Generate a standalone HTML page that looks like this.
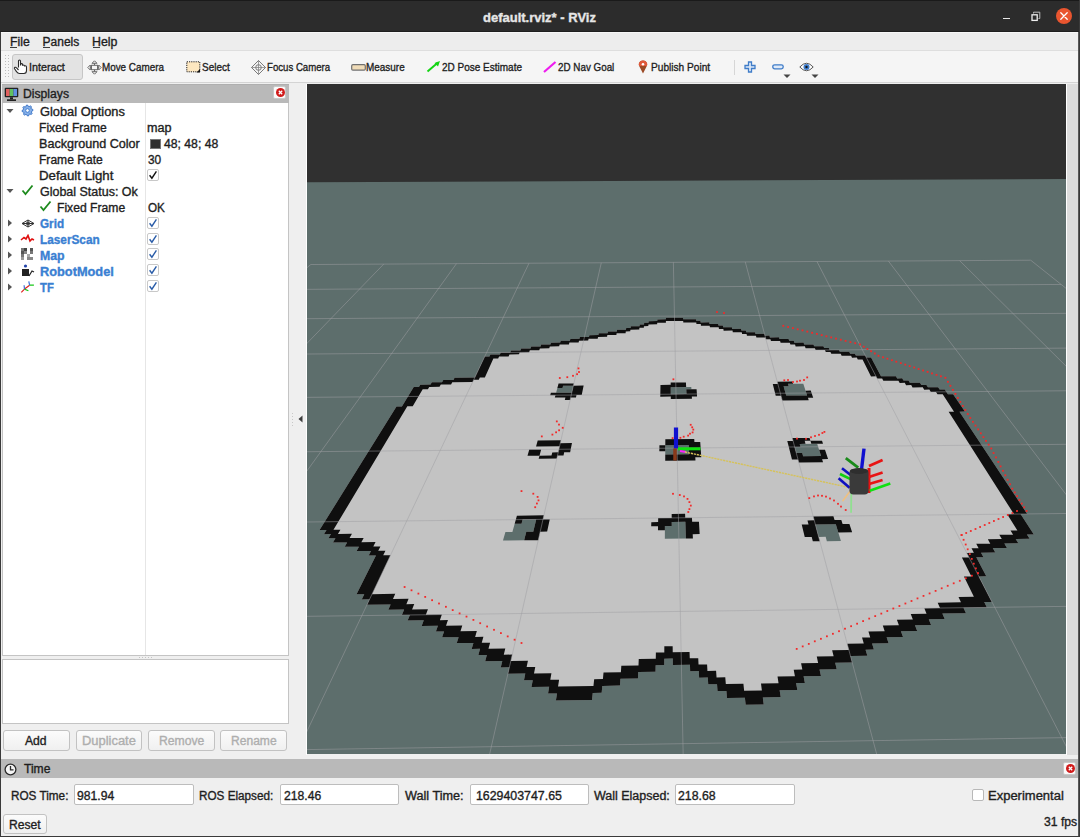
<!DOCTYPE html>
<html><head><meta charset="utf-8"><style>
html,body{margin:0;padding:0;width:1080px;height:837px;overflow:hidden;background:#efefef}
body{position:relative;font-family:"Liberation Sans",sans-serif}
body>div,body>span,body>svg{position:absolute;display:block}
span{white-space:pre;transform-origin:0 0;-webkit-text-stroke:0.35px currentColor}
</style></head><body>
<div style="left:0px;top:0px;width:1080px;height:837px;background:#efefef"></div>
<div style="left:0px;top:0px;width:1080px;height:31px;background:#2c2c2c"></div>
<div style="left:0px;top:31px;width:1080px;height:1px;background:#1f1f1f"></div>
<span style="left:483px;top:10.50px;font-size:13px;line-height:13px;color:#e6e6e6;font-weight:bold;">default.rviz* - RViz</span>
<div style="left:0px;top:0px;width:1080px;height:1px;background:#1a1a1a"></div>
<div style="left:1003px;top:17.5px;width:7px;height:1.5px;background:#e8e8e8"></div>
<svg style="left:1030px;top:11px" width="12" height="11"><path d="M3.5 2.5L3.5 1.2L9.8 1.2L9.8 7.5L8.5 7.5" fill="none" stroke="#bdbdbd" stroke-width="1"/><rect x="2" y="3.8" width="5.2" height="5.6" fill="none" stroke="#f0f0f0" stroke-width="1.3"/></svg>
<div style="left:1056px;top:8px;width:16px;height:16px;border-radius:50%;background:#e9552f"></div>
<svg style="left:1056px;top:8px" width="16" height="16"><path d="M4.8 4.8L11.2 11.2M11.2 4.8L4.8 11.2" stroke="#fff" stroke-width="1.3" stroke-linecap="round"/></svg>
<div style="left:0px;top:32px;width:1080px;height:18px;background:#ededed"></div>
<div style="left:0px;top:32px;width:1080px;height:1px;background:#f7f7f7"></div>
<div style="left:0px;top:50px;width:1080px;height:1px;background:#dedede"></div>
<span style="left:9.7px;top:35.94px;font-size:12px;line-height:12px;color:#1e1e1e;transform:scaleX(1.0188);">File</span>
<div style="left:10.0px;top:47px;width:7px;height:1px;background:#3c3c3c"></div>
<span style="left:42.6px;top:35.94px;font-size:12px;line-height:12px;color:#1e1e1e;">Panels</span>
<div style="left:42.9px;top:47px;width:7px;height:1px;background:#3c3c3c"></div>
<span style="left:92.2px;top:35.94px;font-size:12px;line-height:12px;color:#1e1e1e;transform:scaleX(1.0291);">Help</span>
<div style="left:92.5px;top:47px;width:7px;height:1px;background:#3c3c3c"></div>
<div style="left:0px;top:51px;width:1080px;height:31px;background:#f5f5f5"></div>
<div style="left:0px;top:82px;width:1080px;height:1px;background:#d4d4d4"></div>
<div style="left:5px;top:55px;width:1px;height:22px;background:repeating-linear-gradient(#bdbdbd 0 1px,transparent 1px 3px)"></div>
<div style="left:8px;top:55px;width:1px;height:22px;background:repeating-linear-gradient(#bdbdbd 0 1px,transparent 1px 3px)"></div>
<div style="left:12px;top:54px;width:71px;height:26px;background:#e3e3e3;border:1px solid #c6c6c6;border-radius:3px;box-sizing:border-box"></div>
<span style="left:29.4px;top:62.27px;font-size:11.5px;line-height:11.5px;color:#1e1e1e;transform:scaleX(0.9334);">Interact</span>
<span style="left:102.3px;top:62.27px;font-size:11.5px;line-height:11.5px;color:#1e1e1e;transform:scaleX(0.8571);">Move Camera</span>
<span style="left:201.6px;top:62.27px;font-size:11.5px;line-height:11.5px;color:#1e1e1e;transform:scaleX(0.8666);">Select</span>
<span style="left:267.3px;top:62.27px;font-size:11.5px;line-height:11.5px;color:#1e1e1e;transform:scaleX(0.8367);">Focus Camera</span>
<span style="left:366.4px;top:62.27px;font-size:11.5px;line-height:11.5px;color:#1e1e1e;transform:scaleX(0.8649);">Measure</span>
<span style="left:442px;top:62.27px;font-size:11.5px;line-height:11.5px;color:#1e1e1e;transform:scaleX(0.8692);">2D Pose Estimate</span>
<span style="left:558.2px;top:62.27px;font-size:11.5px;line-height:11.5px;color:#1e1e1e;transform:scaleX(0.8552);">2D Nav Goal</span>
<span style="left:651.4px;top:62.27px;font-size:11.5px;line-height:11.5px;color:#1e1e1e;transform:scaleX(0.8804);">Publish Point</span>
<div style="left:733.5px;top:59.5px;width:1px;height:15.5px;background:#d6d6d6"></div>
<svg style="left:13px;top:59px" width="16" height="16"><path d="M5.5 8.5L5.5 2.2Q5.5 1 6.5 1Q7.5 1 7.5 2.2L7.5 6.5L7.5 5.5Q7.5 4.6 8.5 4.6Q9.5 4.6 9.5 5.5L9.5 6.8Q9.5 6 10.5 6Q11.5 6 11.5 7L11.5 7.5Q11.5 6.8 12.4 6.8Q13.5 6.8 13.5 8L13.5 11.5Q13.5 14.5 11 14.5L6.5 14.5Q4.8 14.5 3.5 12.6L1.6 9.8Q1 8.7 2 8.3Q2.8 8 3.6 9L5.5 11" fill="#fff" stroke="#2a2a2a" stroke-width="1.1"/></svg>
<svg style="left:86.5px;top:59.5px" width="15" height="15"><g fill="none" stroke="#6a6a6a" stroke-width="1"><path d="M7.5 0.8L10 3.3L5 3.3Z M7.5 14.2L10 11.7L5 11.7Z M0.8 7.5L3.3 5L3.3 10Z M14.2 7.5L11.7 5L11.7 10Z"/><rect x="4.5" y="5.3" width="6" height="4.4"/><path d="M7.5 3.3L7.5 5.3M7.5 9.7L7.5 11.7M3.3 7.5L4.5 7.5M10.5 7.5L11.7 7.5"/></g></svg>
<svg style="left:185.5px;top:60.5px" width="15" height="12"><rect x="0.8" y="0.8" width="13" height="10" fill="#fde7c0" stroke="#222" stroke-width="1" stroke-dasharray="1.2 1"/><path d="M14 8L14 11.5L10.5 11.5Z" fill="#111"/></svg>
<svg style="left:251px;top:59.5px" width="15" height="15"><g fill="none" stroke="#7a7a7a" stroke-width="1"><path d="M7.5 0.5L14.5 7.5L7.5 14.5L0.5 7.5Z"/><circle cx="7.5" cy="7.5" r="2.8"/><path d="M7.5 0.5L7.5 14.5M0.5 7.5L14.5 7.5" stroke-width="0.7"/></g></svg>
<svg style="left:350.5px;top:63.5px" width="15" height="7"><rect x="0.7" y="0.7" width="13.6" height="5.4" rx="1.2" fill="#f0dcb8" stroke="#707070" stroke-width="1.2"/></svg>
<svg style="left:426px;top:60px" width="15" height="13"><path d="M1.5 11.5L12 2.5" stroke="#14d414" stroke-width="2"/><path d="M14 1L8.5 3L12 6.5Z" fill="#14d414"/></svg>
<svg style="left:543px;top:61px" width="14" height="12"><path d="M1 11L12.5 1" stroke="#ee1cee" stroke-width="2.2"/></svg>
<svg style="left:637.5px;top:59.5px" width="10" height="14"><path d="M5 13.5L1.4 6.5Q0.5 4.8 0.9 3.5Q1.8 0.6 5 0.6Q8.2 0.6 9.1 3.5Q9.5 4.8 8.6 6.5Z" fill="#9b4a25"/><path d="M1.2 6Q0.5 4.6 0.9 3.5Q1.8 0.6 5 0.6Q8.2 0.6 9.1 3.5Q9.5 4.6 8.8 6Z" fill="#e0583a"/><circle cx="5" cy="4.3" r="1.3" fill="#fff"/></svg>
<svg style="left:744px;top:61px" width="12" height="12"><path d="M4.5 1L7.5 1L7.5 4.5L11 4.5L11 7.5L7.5 7.5L7.5 11L4.5 11L4.5 7.5L1 7.5L1 4.5L4.5 4.5Z" fill="#dfeaf8" stroke="#3f7cc8" stroke-width="1.3"/></svg>
<svg style="left:771.5px;top:64px" width="12" height="6"><rect x="0.8" y="0.8" width="10.4" height="4" rx="1.8" fill="#dfeaf8" stroke="#3f7cc8" stroke-width="1.3"/></svg>
<svg style="left:798.5px;top:62px" width="15" height="10"><path d="M0.8 5Q7.5 -2.5 14.2 5Q7.5 12.5 0.8 5Z" fill="#fff" stroke="#555" stroke-width="1"/><circle cx="7.5" cy="5" r="3" fill="#3d7ccc"/><circle cx="7.5" cy="5" r="1.2" fill="#111"/></svg>
<svg style="left:783px;top:73.5px" width="8" height="5"><path d="M0.5 0.5L7.5 0.5L4 4Z" fill="#444"/></svg>
<svg style="left:810.5px;top:73.5px" width="8" height="5"><path d="M0.5 0.5L7.5 0.5L4 4Z" fill="#444"/></svg>
<div style="left:0px;top:32px;width:1px;height:805px;background:#3a3a3a"></div>
<div style="left:1079px;top:0px;width:1px;height:837px;background:#3a3a3a"></div>
<div style="left:1078px;top:32px;width:1px;height:805px;background:#585858"></div>
<div style="left:0px;top:836px;width:1080px;height:1px;background:#3a3a3a"></div>
<div style="left:2px;top:84px;width:287px;height:19px;background:#b9b9b9;border-top:1px solid #afafaf;box-sizing:border-box"></div>
<span style="left:23px;top:88.14px;font-size:12px;line-height:12px;color:#1e1e1e;transform:scaleX(1.0144);">Displays</span>
<svg style="left:4px;top:86.5px" width="15" height="15"><rect x="0.7" y="0.7" width="13.6" height="9.6" rx="1" fill="#222"/><rect x="2" y="2" width="3.7" height="7" fill="#e06060"/><rect x="5.7" y="2" width="3.7" height="7" fill="#60c060"/><rect x="9.4" y="2" width="3.6" height="7" fill="#6090e0"/><rect x="6" y="10.3" width="3" height="2" fill="#222"/><rect x="3" y="12.3" width="9" height="1.7" fill="#222"/></svg>
<div style="left:273px;top:86px;width:13px;height:13px;background:#fafafa;border:1px solid #c9c9c9;border-radius:2px;box-sizing:border-box"></div>
<div style="left:275.5px;top:88px;width:9px;height:9px;border-radius:50%;background:#d01a1a"></div>
<svg style="left:275.5px;top:88px" width="9" height="9"><path d="M2.8 2.8L6.2 6.2M6.2 2.8L2.8 6.2" stroke="#fff" stroke-width="1.3"/></svg>
<div style="left:2px;top:103px;width:287px;height:553px;background:#fff;border:1px solid #c4c4c4;border-top:none;box-sizing:border-box"></div>
<div style="left:145px;top:103px;width:1px;height:552px;background:#e6e6e6"></div>
<span style="left:40px;top:106.14px;font-size:12px;line-height:12px;color:#1e1e1e;transform:scaleX(1.0696);">Global Options</span>
<span style="left:38.5px;top:121.94px;font-size:12px;line-height:12px;color:#1e1e1e;transform:scaleX(1.0067);">Fixed Frame</span>
<span style="left:38.5px;top:138.04px;font-size:12px;line-height:12px;color:#1e1e1e;transform:scaleX(1.0494);">Background Color</span>
<span style="left:38.5px;top:153.74px;font-size:12px;line-height:12px;color:#1e1e1e;transform:scaleX(1.0055);">Frame Rate</span>
<span style="left:38.5px;top:169.64px;font-size:12px;line-height:12px;color:#1e1e1e;transform:scaleX(1.1042);">Default Light</span>
<span style="left:40px;top:185.54px;font-size:12px;line-height:12px;color:#1e1e1e;transform:scaleX(1.0399);">Global Status: Ok</span>
<span style="left:57px;top:201.74px;font-size:12px;line-height:12px;color:#1e1e1e;transform:scaleX(1.0126);">Fixed Frame</span>
<span style="left:40.3px;top:217.74px;font-size:12px;line-height:12px;color:#3a7fd2;font-weight:bold;transform:scaleX(0.9770);">Grid</span>
<span style="left:40.3px;top:233.64px;font-size:12px;line-height:12px;color:#3a7fd2;font-weight:bold;transform:scaleX(0.9834);">LaserScan</span>
<span style="left:40.3px;top:249.54px;font-size:12px;line-height:12px;color:#3a7fd2;font-weight:bold;transform:scaleX(1.0250);">Map</span>
<span style="left:40.3px;top:265.54px;font-size:12px;line-height:12px;color:#3a7fd2;font-weight:bold;transform:scaleX(1.0646);">RobotModel</span>
<span style="left:40.3px;top:281.54px;font-size:12px;line-height:12px;color:#3a7fd2;font-weight:bold;transform:scaleX(0.9413);">TF</span>
<span style="left:147.4px;top:121.94px;font-size:12px;line-height:12px;color:#1e1e1e;transform:scaleX(1.0495);">map</span>
<div style="left:150px;top:138.5px;width:10.5px;height:10px;background:#303030;border:1px solid #777;box-sizing:border-box"></div>
<span style="left:164.4px;top:138.04px;font-size:12px;line-height:12px;color:#1e1e1e;transform:scaleX(1.0154);">48; 48; 48</span>
<span style="left:147.8px;top:153.74px;font-size:12px;line-height:12px;color:#1e1e1e;transform:scaleX(0.9889);">30</span>
<span style="left:147.8px;top:201.74px;font-size:12px;line-height:12px;color:#1e1e1e;transform:scaleX(0.9747);">OK</span>
<div style="left:147px;top:169px;width:12px;height:12px;background:#fff;border:1px solid #c8c8c8;border-radius:2px;box-sizing:border-box"></div>
<svg style="left:147px;top:169px" width="12" height="12"><path d="M2.6 6.2L4.9 9.2L9.4 2.4" fill="none" stroke="#111" stroke-width="1.4"/></svg>
<div style="left:147px;top:216.6px;width:12px;height:12px;background:#fff;border:1px solid #c8c8c8;border-radius:2px;box-sizing:border-box"></div>
<svg style="left:147px;top:216.6px" width="12" height="12"><path d="M2.6 6.2L4.9 9.2L9.4 2.4" fill="none" stroke="#2a5ca8" stroke-width="1.4"/></svg>
<div style="left:147px;top:232.5px;width:12px;height:12px;background:#fff;border:1px solid #c8c8c8;border-radius:2px;box-sizing:border-box"></div>
<svg style="left:147px;top:232.5px" width="12" height="12"><path d="M2.6 6.2L4.9 9.2L9.4 2.4" fill="none" stroke="#2a5ca8" stroke-width="1.4"/></svg>
<div style="left:147px;top:248.39999999999998px;width:12px;height:12px;background:#fff;border:1px solid #c8c8c8;border-radius:2px;box-sizing:border-box"></div>
<svg style="left:147px;top:248.39999999999998px" width="12" height="12"><path d="M2.6 6.2L4.9 9.2L9.4 2.4" fill="none" stroke="#2a5ca8" stroke-width="1.4"/></svg>
<div style="left:147px;top:264.4px;width:12px;height:12px;background:#fff;border:1px solid #c8c8c8;border-radius:2px;box-sizing:border-box"></div>
<svg style="left:147px;top:264.4px" width="12" height="12"><path d="M2.6 6.2L4.9 9.2L9.4 2.4" fill="none" stroke="#2a5ca8" stroke-width="1.4"/></svg>
<div style="left:147px;top:280.4px;width:12px;height:12px;background:#fff;border:1px solid #c8c8c8;border-radius:2px;box-sizing:border-box"></div>
<svg style="left:147px;top:280.4px" width="12" height="12"><path d="M2.6 6.2L4.9 9.2L9.4 2.4" fill="none" stroke="#2a5ca8" stroke-width="1.4"/></svg>
<svg style="left:6px;top:108px" width="8" height="6"><path d="M0.5 1L7.5 1L4 5Z" fill="#555"/></svg>
<svg style="left:6px;top:188px" width="8" height="6"><path d="M0.5 1L7.5 1L4 5Z" fill="#555"/></svg>
<svg style="left:7px;top:219.1px" width="6" height="8"><path d="M1 0.5L5 4L1 7.5Z" fill="#555"/></svg>
<svg style="left:7px;top:235.0px" width="6" height="8"><path d="M1 0.5L5 4L1 7.5Z" fill="#555"/></svg>
<svg style="left:7px;top:250.89999999999998px" width="6" height="8"><path d="M1 0.5L5 4L1 7.5Z" fill="#555"/></svg>
<svg style="left:7px;top:266.9px" width="6" height="8"><path d="M1 0.5L5 4L1 7.5Z" fill="#555"/></svg>
<svg style="left:7px;top:282.9px" width="6" height="8"><path d="M1 0.5L5 4L1 7.5Z" fill="#555"/></svg>
<svg style="left:21px;top:104px" width="13" height="13" viewBox="-0.6 -0.6 14.2 14.2"><path d="M12.38 5.33L12.50 6.50L11.01 7.40L10.75 8.26L11.49 9.83L10.74 10.74L9.06 10.32L8.26 10.75L7.67 12.38L6.50 12.50L5.60 11.01L4.74 10.75L3.17 11.49L2.26 10.74L2.68 9.06L2.25 8.26L0.62 7.67L0.50 6.50L1.99 5.60L2.25 4.74L1.51 3.17L2.26 2.26L3.94 2.68L4.74 2.25L5.33 0.62L6.50 0.50L7.40 1.99L8.26 2.25L9.83 1.51L10.74 2.26L10.32 3.94L10.75 4.74Z" fill="#86b0e8" stroke="#336fc4" stroke-width="1"/><circle cx="6.5" cy="6.5" r="2" fill="#fff" stroke="#3d7bd0" stroke-width="1"/></svg>
<svg style="left:21px;top:184px" width="13" height="12"><path d="M1.5 6.5L4.5 10L11.5 1.5" fill="none" stroke="#1d8a1d" stroke-width="1.8"/></svg>
<svg style="left:39px;top:200px" width="13" height="12"><path d="M1.5 6.5L4.5 10L11.5 1.5" fill="none" stroke="#1d8a1d" stroke-width="1.8"/></svg>
<svg style="left:21px;top:218.5px" width="14" height="9"><path d="M1 4.5L7 1L13 4.5L7 8Z M4.5 4.5L7 3L9.5 4.5L7 6Z M1 4.5L13 4.5M7 1L7 8" fill="none" stroke="#333" stroke-width="1"/></svg>
<svg style="left:20px;top:234px" width="15" height="9"><path d="M1 6L4 3.5L6 5L8 1.5L10 7L12 5L14 6" fill="none" stroke="#e01010" stroke-width="1.6"/></svg>
<svg style="left:21px;top:248px" width="13" height="13"><g fill="#777"><rect x="0" y="0" width="3" height="3"/><rect x="3" y="0" width="3" height="3" fill="#444"/><rect x="9" y="0" width="3" height="3" fill="#555"/><rect x="0" y="3" width="3" height="3" fill="#555"/><rect x="3" y="3" width="3" height="3" fill="#888"/><rect x="9" y="3" width="3" height="3"/><rect x="0" y="6" width="3" height="3"/><rect x="6" y="6" width="3" height="3" fill="#aaa"/><rect x="0" y="9" width="3" height="3" fill="#999"/><rect x="6" y="9" width="6" height="3" fill="#888"/></g></svg>
<svg style="left:21px;top:264px" width="14" height="13"><g fill="#222"><circle cx="4.5" cy="2" r="1.6" fill="#2244aa"/><rect x="1" y="5" width="7" height="7"/><path d="M8 12L11 7L13 8" fill="none" stroke="#222" stroke-width="1.2"/></g></svg>
<svg style="left:20px;top:280px" width="15" height="14"><g stroke-width="1.2" fill="none"><path d="M4.5 9.1L1.3 12.3M9.6 5.2L4.5 9.1" stroke="#e02020"/><path d="M4.5 9.1L8.4 10.7M9.6 5.2L13.9 5.2" stroke="#18c818"/><path d="M4.5 9.1L4.1 5.2M9.6 5.2L8.8 1.3" stroke="#3a70d8"/></g></svg>
<div style="left:2px;top:659px;width:287px;height:65px;background:#fff;border:1px solid #c4c4c4;box-sizing:border-box"></div>
<div style="left:139px;top:657px;width:15px;height:1px;background:repeating-linear-gradient(90deg,#c4c4c4 0 1px,transparent 1px 3px)"></div>
<div style="left:3px;top:730px;width:67px;height:21px;background:linear-gradient(#fbfbfb,#f0f0f0);border:1px solid #c2c2c2;border-radius:3px;box-sizing:border-box"></div>
<span style="left:25.2px;top:735.04px;font-size:12px;line-height:12px;color:#1e1e1e;transform:scaleX(1.0116);">Add</span>
<div style="left:75.5px;top:730px;width:66px;height:21px;background:linear-gradient(#fbfbfb,#f0f0f0);border:1px solid #c2c2c2;border-radius:3px;box-sizing:border-box"></div>
<span style="left:81.5px;top:735.04px;font-size:12px;line-height:12px;color:#aeaeae;transform:scaleX(1.0774);">Duplicate</span>
<div style="left:147.5px;top:730px;width:67px;height:21px;background:linear-gradient(#fbfbfb,#f0f0f0);border:1px solid #c2c2c2;border-radius:3px;box-sizing:border-box"></div>
<span style="left:158.5px;top:735.04px;font-size:12px;line-height:12px;color:#aeaeae;transform:scaleX(1.0160);">Remove</span>
<div style="left:220px;top:730px;width:67px;height:21px;background:linear-gradient(#fbfbfb,#f0f0f0);border:1px solid #c2c2c2;border-radius:3px;box-sizing:border-box"></div>
<span style="left:230.5px;top:735.04px;font-size:12px;line-height:12px;color:#aeaeae;transform:scaleX(1.0053);">Rename</span>
<svg style="left:297px;top:414px" width="8" height="10"><path d="M1.5 5L5.5 1.5L5.5 8.5Z" fill="#3c3c3c"/></svg>
<svg style="left:1068px;top:414px" width="8" height="10"><path d="M2 5L6 1.5L6 8.5Z" fill="#3c3c3c"/></svg>
<div style="left:292px;top:413px;width:1px;height:1px;background:#c8c8c8"></div>
<div style="left:292px;top:416px;width:1px;height:1px;background:#c8c8c8"></div>
<div style="left:292px;top:419px;width:1px;height:1px;background:#c8c8c8"></div>
<div style="left:292px;top:422px;width:1px;height:1px;background:#c8c8c8"></div>
<div style="left:292px;top:425px;width:1px;height:1px;background:#c8c8c8"></div>
<div style="left:1067px;top:84px;width:11px;height:671px;background:#dcdcdc"></div>
<div style="left:306px;top:84px;width:1px;height:671px;background:#ffffff"></div>
<div style="left:1066px;top:84px;width:1px;height:671px;background:#ffffff"></div>
<div style="left:1px;top:759px;width:1077px;height:19px;background:#b9b9b9"></div>
<svg style="left:4px;top:763px" width="13" height="13"><circle cx="6.5" cy="6.5" r="5.4" fill="#f4f4f4" stroke="#2b2b2b" stroke-width="1.3"/><path d="M6.5 3L6.5 6.8L9.5 6.8" fill="none" stroke="#2b2b2b" stroke-width="1.3"/></svg>
<span style="left:23.6px;top:763.44px;font-size:12px;line-height:12px;color:#1e1e1e;transform:scaleX(1.0068);">Time</span>
<div style="left:1063px;top:762px;width:13px;height:13px;background:#fafafa;border:1px solid #c9c9c9;border-radius:2px;box-sizing:border-box"></div>
<div style="left:1065.5px;top:764px;width:9px;height:9px;border-radius:50%;background:#d01a1a"></div>
<svg style="left:1065.5px;top:764px" width="9" height="9"><path d="M2.8 2.8L6.2 6.2M6.2 2.8L2.8 6.2" stroke="#fff" stroke-width="1.3"/></svg>
<span style="left:10.6px;top:789.64px;font-size:12px;line-height:12px;color:#1e1e1e;transform:scaleX(0.9782);">ROS Time:</span>
<div style="left:74px;top:784px;width:119.5px;height:20.5px;background:#fff;border:1px solid #bdbdbd;border-radius:2px;box-sizing:border-box"></div>
<span style="left:77.2px;top:789.64px;font-size:12px;line-height:12px;color:#1e1e1e;transform:scaleX(1.0135);">981.94</span>
<span style="left:199.4px;top:789.64px;font-size:12px;line-height:12px;color:#1e1e1e;transform:scaleX(0.9758);">ROS Elapsed:</span>
<div style="left:280px;top:784px;width:119px;height:20.5px;background:#fff;border:1px solid #bdbdbd;border-radius:2px;box-sizing:border-box"></div>
<span style="left:283.5px;top:789.64px;font-size:12px;line-height:12px;color:#1e1e1e;transform:scaleX(1.0135);">218.46</span>
<span style="left:404.7px;top:789.64px;font-size:12px;line-height:12px;color:#1e1e1e;transform:scaleX(1.0529);">Wall Time:</span>
<div style="left:469.5px;top:784px;width:119.5px;height:20.5px;background:#fff;border:1px solid #bdbdbd;border-radius:2px;box-sizing:border-box"></div>
<span style="left:475.5px;top:789.64px;font-size:12px;line-height:12px;color:#1e1e1e;transform:scaleX(1.0297);">1629403747.65</span>
<span style="left:594px;top:789.64px;font-size:12px;line-height:12px;color:#1e1e1e;transform:scaleX(1.0395);">Wall Elapsed:</span>
<div style="left:674.5px;top:784px;width:120px;height:20.5px;background:#fff;border:1px solid #bdbdbd;border-radius:2px;box-sizing:border-box"></div>
<span style="left:678.4px;top:789.64px;font-size:12px;line-height:12px;color:#1e1e1e;transform:scaleX(1.0244);">218.68</span>
<div style="left:972px;top:789px;width:12px;height:12px;background:#fff;border:1px solid #b8b8b8;border-radius:2px;box-sizing:border-box"></div>
<span style="left:988.3px;top:789.64px;font-size:12px;line-height:12px;color:#1e1e1e;transform:scaleX(1.0823);">Experimental</span>
<div style="left:3px;top:814px;width:44px;height:20px;background:linear-gradient(#fbfbfb,#f0f0f0);border:1px solid #c2c2c2;border-radius:3px;box-sizing:border-box"></div>
<span style="left:8.9px;top:819.44px;font-size:12px;line-height:12px;color:#1e1e1e;transform:scaleX(1.0112);">Reset</span>
<span style="left:1043.9px;top:815.84px;font-size:12px;line-height:12px;color:#1e1e1e;transform:scaleX(1.0126);">31 fps</span>
<svg style="left:307px;top:84px" width="759" height="670" viewBox="0 0 759 670"><rect x="0" y="0" width="759" height="670" fill="#303030"/><path d="M-265.03 99.44L1079.67 93.61L759 670L0 670Z" fill="#5d6e6c"/><path d="M358.92 233.76L376.05 233.64L376.13 235.25L389.03 235.16L389.16 236.78L393.48 236.75L393.63 238.40L402.31 238.33L402.51 239.99L411.22 239.93L411.46 241.60L415.84 241.57L416.10 243.26L424.89 243.19L425.20 244.89L434.03 244.83L434.38 246.55L438.82 246.52L439.20 248.25L448.11 248.19L448.53 249.94L457.48 249.87L457.95 251.64L462.45 251.60L462.95 253.39L471.98 253.32L472.53 255.12L481.61 255.05L482.20 256.87L486.76 256.84L487.39 258.68L496.55 258.61L497.23 260.46L506.43 260.39L507.16 262.26L516.40 262.19L517.19 264.08L521.83 264.04L522.65 265.95L531.98 265.88L532.85 267.81L542.23 267.74L543.16 269.68L547.87 269.65L548.83 271.61L558.30 271.54L559.32 273.52L564.07 273.49L573.99 292.33L588.95 292.20L590.19 294.41L595.20 294.36L596.48 296.59L601.52 296.55L602.85 298.81L612.97 298.72L614.37 301.00L619.46 300.95L620.90 303.26L631.13 303.17L632.64 305.50L637.78 305.45L640.91 310.18L646.11 310.14L657.88 327.58L652.47 327.63L720.23 429.92L713.57 430.00L726.85 450.44L719.94 450.52L722.67 454.80L708.74 454.96L711.40 459.30L697.35 459.47L699.95 463.88L685.79 464.05L688.32 468.53L674.04 468.71L676.49 473.26L669.29 473.35L679.28 492.32L671.85 492.41L684.97 517.94L677.22 518.04L679.92 523.40L656.47 523.71L659.01 529.17L635.34 529.49L637.72 535.05L621.79 535.26L624.07 540.93L607.99 541.14L610.17 546.91L593.94 547.13L596.02 553.01L579.63 553.23L581.60 559.22L565.06 559.45L566.91 565.54L558.56 565.66L560.37 571.87L543.51 572.11L545.20 578.44L528.17 578.68L529.74 585.13L512.54 585.38L513.97 591.96L496.60 592.21L497.89 598.92L489.12 599.04L490.35 605.88L472.63 606.15L473.72 613.12L455.81 613.39L456.74 620.51L438.64 620.78L437.89 613.66L419.95 613.92L419.38 606.93L410.49 607.06L410.02 600.20L401.21 600.33L400.83 593.59L392.11 593.72L391.81 587.11L383.16 587.23L382.96 580.74L365.81 580.98L365.77 574.61L357.27 574.73L357.24 581.11L348.66 581.23L348.55 587.73L331.22 587.98L330.95 594.60L313.44 594.86L312.99 601.62L295.31 601.88L294.68 608.77L285.75 608.90L285.02 615.93L248.91 616.47L249.99 609.43L241.04 609.56L242.19 602.65L224.45 602.91L225.74 596.13L216.96 596.25L218.30 589.60L200.89 589.85L202.37 583.31L193.74 583.43L195.28 577.01L178.16 577.25L179.83 570.94L171.35 571.06L173.06 564.86L164.65 564.98L166.41 558.89L149.74 559.12L151.62 553.14L135.08 553.36L137.07 547.48L128.87 547.59L130.90 541.81L114.64 542.03L116.77 536.35L100.64 536.56L102.88 530.97L94.88 531.07L97.15 525.58L81.28 525.79L83.64 520.38L60.02 520.68L62.54 515.36L54.73 515.46L57.28 510.23L49.53 510.33L68.96 471.39L61.70 471.48L64.01 466.95L49.59 467.12L51.98 462.65L37.67 462.82L40.13 458.43L25.92 458.59L28.45 454.26L21.40 454.34L23.95 450.07L16.94 450.15L19.51 445.95L12.55 446.03L89.50 322.43L94.91 322.38L106.73 303.02L111.89 302.98L113.27 300.68L123.54 300.59L124.84 298.32L135.05 298.23L136.28 295.98L146.43 295.90L147.60 293.68L167.78 293.51L177.71 272.57L182.49 272.53L183.40 270.55L192.91 270.48L193.77 268.52L203.23 268.45L204.02 266.51L213.43 266.44L214.17 264.53L223.53 264.46L224.22 262.56L233.52 262.49L234.15 260.61L243.41 260.54L243.99 258.69L253.20 258.62L253.73 256.78L262.88 256.71L263.36 254.90L272.47 254.83L272.90 253.03L281.96 252.96L282.34 251.18L291.36 251.11L291.69 249.35L300.66 249.28L300.94 247.54L309.86 247.47L310.11 245.74L318.98 245.68L319.18 243.97L323.59 243.93L323.77 242.24L332.55 242.18L332.68 240.50L337.05 240.47L337.16 238.80L341.51 238.77L341.60 237.13L350.25 237.06L350.30 235.43L358.91 235.37Z" fill="#c3c3c3"/><path d="M358.92 233.76L376.05 233.64L376.13 235.25L389.03 235.16L389.16 236.78L393.48 236.75L393.63 238.40L402.31 238.33L402.51 239.99L411.22 239.93L411.46 241.60L415.84 241.57L416.10 243.26L424.89 243.19L425.20 244.89L434.03 244.83L434.38 246.55L438.82 246.52L439.20 248.25L448.11 248.19L448.53 249.94L457.48 249.87L457.95 251.64L462.45 251.60L462.95 253.39L471.98 253.32L472.53 255.12L481.61 255.05L482.20 256.87L486.76 256.84L487.39 258.68L496.55 258.61L497.23 260.46L506.43 260.39L507.16 262.26L516.40 262.19L517.19 264.08L521.83 264.04L522.65 265.95L531.98 265.88L532.85 267.81L542.23 267.74L543.16 269.68L547.87 269.65L548.83 271.61L558.30 271.54L559.32 273.52L564.07 273.49L573.99 292.33L588.95 292.20L590.19 294.41L595.20 294.36L596.48 296.59L601.52 296.55L602.85 298.81L612.97 298.72L614.37 301.00L619.46 300.95L620.90 303.26L631.13 303.17L632.64 305.50L637.78 305.45L640.91 310.18L646.11 310.14L657.88 327.58L652.47 327.63L720.23 429.92L713.57 430.00L726.85 450.44L719.94 450.52L722.67 454.80L708.74 454.96L711.40 459.30L697.35 459.47L699.95 463.88L685.79 464.05L688.32 468.53L674.04 468.71L676.49 473.26L669.29 473.35L679.28 492.32L671.85 492.41L684.97 517.94L677.22 518.04L679.92 523.40L656.47 523.71L659.01 529.17L635.34 529.49L637.72 535.05L621.79 535.26L624.07 540.93L607.99 541.14L610.17 546.91L593.94 547.13L596.02 553.01L579.63 553.23L581.60 559.22L565.06 559.45L566.91 565.54L558.56 565.66L560.37 571.87L543.51 572.11L545.20 578.44L528.17 578.68L529.74 585.13L512.54 585.38L513.97 591.96L496.60 592.21L497.89 598.92L489.12 599.04L490.35 605.88L472.63 606.15L473.72 613.12L455.81 613.39L456.74 620.51L438.64 620.78L437.89 613.66L419.95 613.92L419.38 606.93L410.49 607.06L410.02 600.20L401.21 600.33L400.83 593.59L392.11 593.72L391.81 587.11L383.16 587.23L382.96 580.74L365.81 580.98L365.77 574.61L357.27 574.73L357.24 581.11L348.66 581.23L348.55 587.73L331.22 587.98L330.95 594.60L313.44 594.86L312.99 601.62L295.31 601.88L294.68 608.77L285.75 608.90L285.02 615.93L248.91 616.47L249.99 609.43L241.04 609.56L242.19 602.65L224.45 602.91L225.74 596.13L216.96 596.25L218.30 589.60L200.89 589.85L202.37 583.31L193.74 583.43L195.28 577.01L178.16 577.25L179.83 570.94L171.35 571.06L173.06 564.86L164.65 564.98L166.41 558.89L149.74 559.12L151.62 553.14L135.08 553.36L137.07 547.48L128.87 547.59L130.90 541.81L114.64 542.03L116.77 536.35L100.64 536.56L102.88 530.97L94.88 531.07L97.15 525.58L81.28 525.79L83.64 520.38L60.02 520.68L62.54 515.36L54.73 515.46L57.28 510.23L49.53 510.33L68.96 471.39L61.70 471.48L64.01 466.95L49.59 467.12L51.98 462.65L37.67 462.82L40.13 458.43L25.92 458.59L28.45 454.26L21.40 454.34L23.95 450.07L16.94 450.15L19.51 445.95L12.55 446.03L89.50 322.43L94.91 322.38L106.73 303.02L111.89 302.98L113.27 300.68L123.54 300.59L124.84 298.32L135.05 298.23L136.28 295.98L146.43 295.90L147.60 293.68L167.78 293.51L177.71 272.57L182.49 272.53L183.40 270.55L192.91 270.48L193.77 268.52L203.23 268.45L204.02 266.51L213.43 266.44L214.17 264.53L223.53 264.46L224.22 262.56L233.52 262.49L234.15 260.61L243.41 260.54L243.99 258.69L253.20 258.62L253.73 256.78L262.88 256.71L263.36 254.90L272.47 254.83L272.90 253.03L281.96 252.96L282.34 251.18L291.36 251.11L291.69 249.35L300.66 249.28L300.94 247.54L309.86 247.47L310.11 245.74L318.98 245.68L319.18 243.97L323.59 243.93L323.77 242.24L332.55 242.18L332.68 240.50L337.05 240.47L337.16 238.80L341.51 238.77L341.60 237.13L350.25 237.06L350.30 235.43L358.91 235.37ZM358.91 237.00L358.90 238.65L350.21 238.71L350.16 240.37L341.42 240.43L341.33 242.11L336.94 242.14L336.83 243.84L332.42 243.87L332.28 245.58L323.41 245.64L323.23 247.37L318.78 247.40L318.58 249.15L309.62 249.21L309.37 250.98L300.36 251.04L300.07 252.82L291.02 252.89L290.68 254.69L281.57 254.76L281.18 256.57L272.04 256.64L271.60 258.48L262.40 258.55L261.91 260.40L252.66 260.47L252.12 262.35L242.82 262.42L242.23 264.31L232.88 264.38L232.23 266.30L222.83 266.37L222.13 268.30L212.68 268.38L211.92 270.33L202.42 270.40L201.61 272.38L192.05 272.45L191.18 274.45L186.37 274.49L177.86 293.43L172.82 293.47L171.79 295.69L166.72 295.73L165.66 297.97L145.26 298.15L144.07 300.42L133.81 300.50L132.55 302.80L122.22 302.89L120.89 305.21L115.70 305.26L105.73 322.29L100.32 322.33L26.46 445.87L33.41 445.79L30.95 449.99L44.95 449.83L42.56 454.10L56.66 453.93L54.34 458.26L68.54 458.10L66.29 462.49L73.45 462.40L71.22 466.86L78.43 466.78L76.22 471.30L83.48 471.22L65.03 510.13L88.25 509.84L85.96 515.06L101.57 514.86L99.37 520.18L107.24 520.07L105.08 525.48L120.93 525.27L118.87 530.76L134.85 530.55L132.89 536.13L140.95 536.03L139.03 541.70L155.27 541.49L153.46 547.26L169.84 547.04L168.14 552.91L176.40 552.80L174.75 558.78L183.08 558.66L181.47 564.75L198.27 564.51L196.79 570.70L205.26 570.59L203.83 576.89L220.93 576.65L219.63 583.06L228.25 582.94L227.01 589.47L244.41 589.22L243.31 595.87L252.09 595.75L251.05 602.52L286.46 602.00L287.17 595.24L295.93 595.11L296.53 588.47L313.88 588.23L314.32 581.72L331.50 581.47L331.76 575.09L348.77 574.85L348.88 568.58L357.30 568.47L357.33 562.32L365.67 562.20L365.72 568.35L382.55 568.11L382.75 574.37L391.24 574.25L391.52 580.62L400.08 580.50L400.45 586.98L409.09 586.86L409.55 593.47L418.27 593.34L418.82 600.07L436.41 599.81L437.14 606.67L454.89 606.41L453.99 599.56L471.56 599.30L470.52 592.59L487.91 592.33L486.72 585.75L495.33 585.62L494.08 579.16L511.13 578.92L509.76 572.58L526.64 572.34L525.13 566.13L541.85 565.89L540.22 559.79L556.78 559.56L555.04 553.57L563.24 553.46L561.45 547.57L577.70 547.35L575.80 541.58L591.90 541.36L589.90 535.69L605.85 535.48L603.74 529.90L619.54 529.70L617.34 524.22L633.00 524.02L630.70 518.64L653.97 518.34L651.52 513.06L666.89 512.86L656.98 492.60L664.41 492.51L654.89 473.52L662.09 473.44L659.75 468.88L666.89 468.79L664.53 464.30L671.62 464.22L669.24 459.80L683.30 459.63L680.85 455.29L694.80 455.12L692.28 450.84L706.12 450.68L703.53 446.47L710.40 446.39L700.24 430.15L706.90 430.07L641.64 327.72L647.06 327.68L635.72 310.23L630.51 310.27L629.00 307.89L623.82 307.94L622.35 305.58L617.21 305.63L615.78 303.30L605.54 303.39L604.19 301.08L599.10 301.13L597.78 298.85L592.72 298.89L591.45 296.64L576.33 296.76L575.15 294.53L570.14 294.58L569.01 292.37L564.02 292.41L555.57 275.57L550.79 275.61L549.80 273.60L545.04 273.64L544.10 271.65L534.62 271.72L533.73 269.76L524.31 269.83L523.47 267.88L518.78 267.92L517.98 265.99L508.64 266.06L507.90 264.15L498.60 264.23L497.91 262.33L488.66 262.40L488.02 260.53L483.42 260.57L482.81 258.71L473.64 258.78L473.08 256.94L463.96 257.01L463.45 255.19L458.91 255.23L458.43 253.42L449.39 253.49L448.96 251.71L439.96 251.77L439.58 250.00L435.10 250.04L434.74 248.28L425.82 248.35L425.51 246.61L416.63 246.68L416.36 244.96L411.95 244.99L411.70 243.29L402.91 243.35L402.70 241.66L393.95 241.73L393.79 240.05L389.43 240.09L389.29 238.43L376.27 238.52L376.20 236.88Z" fill="#0f0f0f"/><path d="M256.10 301.75L266.37 301.66L264.78 308.67L249.11 308.81L250.36 304.11L255.52 304.06Z" fill="#5d6e6c"/><path d="M251.57 299.51L266.89 299.38L266.37 301.66L276.64 301.58L274.73 310.97L269.49 311.02L268.97 313.43L263.69 313.48L263.13 315.92L257.82 315.97L258.41 313.53L247.84 313.62L248.48 311.20L243.23 311.25L243.89 308.85L264.78 308.67L266.37 301.66L256.10 301.75L255.52 304.06L250.36 304.11Z" fill="#0f0f0f"/><path d="M363.73 303.14L384.28 302.96L384.42 305.29L379.25 305.33L379.46 310.06L363.78 310.20Z" fill="#5d6e6c"/><path d="M363.69 298.56L378.94 298.43L379.15 303.01L363.73 303.14L363.78 310.20L379.46 310.06L379.25 305.33L389.58 305.24L390.08 312.38L384.82 312.42L384.96 314.85L363.82 315.04L363.80 312.60L353.28 312.70L353.48 300.92L363.71 300.84Z" fill="#0f0f0f"/><path d="M481.03 299.84L496.29 299.71L500.13 311.41L479.21 311.60L476.58 302.17L481.69 302.13Z" fill="#5d6e6c"/><path d="M470.24 297.66L485.43 297.53L486.11 299.80L481.03 299.84L481.69 302.13L476.58 302.17L479.21 311.60L500.13 311.41L498.57 306.65L503.74 306.61L506.19 313.79L500.93 313.83L501.73 316.28L475.28 316.52L473.97 311.64L468.74 311.69L465.76 299.97L470.85 299.93Z" fill="#0f0f0f"/><path d="M230.71 356.49L253.96 356.27L253.29 359.23L264.98 359.12L263.14 368.22L257.18 368.28L256.51 371.40L250.51 371.46L249.80 374.61L231.67 374.79L232.51 371.63L244.51 371.52L245.26 368.40L251.22 368.34L252.61 362.23L229.06 362.46ZM222.29 365.55L234.15 365.44L232.51 371.63L220.50 371.75Z" fill="#0f0f0f"/><path d="M358.30 361.20L381.73 360.97L382.14 370.15L358.26 370.39Z" fill="#5d6e6c"/><path d="M358.33 355.26L387.25 354.99L387.41 357.93L393.23 357.88L394.29 373.17L388.28 373.23L388.47 376.41L358.23 376.71L358.26 370.39L382.14 370.15L381.73 360.97L358.30 361.20L358.27 367.29L352.34 367.34L352.44 361.26L358.30 361.20Z" fill="#0f0f0f"/><path d="M492.70 359.89L510.17 359.72L514.05 371.98L496.12 372.16L495.25 369.03L489.31 369.09L487.67 362.96L493.54 362.90Z" fill="#5d6e6c"/><path d="M485.30 354.05L502.56 353.88L503.45 356.81L515.02 356.70L516.00 359.67L504.35 359.78L503.45 356.81L497.66 356.87L498.53 359.84L492.70 359.89L493.54 362.90L487.67 362.96L489.31 369.09L495.25 369.03L496.12 372.16L514.05 371.98L512.09 365.77L517.99 365.71L521.06 375.08L515.05 375.14L516.07 378.34L491.85 378.59L490.99 375.38L484.97 375.44L480.29 357.03L486.08 356.98Z" fill="#0f0f0f"/><path d="M215.61 435.58L229.20 435.43L226.25 447.75L219.30 447.83L217.15 456.37L195.97 456.61L198.44 448.07L205.40 447.99L207.69 439.71L214.54 439.63Z" fill="#5d6e6c"/><path d="M209.91 431.66L236.90 431.36L235.99 435.35L242.78 435.27L240.14 447.60L233.19 447.67L231.25 456.20L217.15 456.37L219.30 447.83L226.25 447.75L229.20 435.43L215.61 435.58L214.54 439.63L207.69 439.71Z" fill="#0f0f0f"/><path d="M364.74 437.93L378.35 437.78L378.89 454.49L357.85 454.73L357.91 442.10L364.77 442.02Z" fill="#5d6e6c"/><path d="M364.68 429.94L378.09 429.79L378.22 433.76L384.97 433.68L385.15 437.70L391.95 437.63L392.66 450.06L385.71 450.14L385.90 454.41L378.89 454.49L378.35 437.78L364.74 437.93L364.77 442.02L357.91 442.10L357.89 446.25L350.98 446.33L351.05 442.18L344.19 442.25L344.31 438.16L351.12 438.09L351.19 434.06L364.71 433.91Z" fill="#0f0f0f"/><path d="M508.35 440.39L528.79 440.15L533.91 457.01L519.87 457.17L518.67 452.86L511.70 452.94Z" fill="#5d6e6c"/><path d="M506.19 432.32L526.34 432.10L527.55 436.10L534.32 436.02L535.60 440.08L542.41 440.00L545.13 448.30L531.31 448.46L528.79 440.15L508.35 440.39L512.85 457.25L505.82 457.34L504.73 453.02L497.75 453.10L494.71 440.54L501.53 440.46L500.49 436.40L507.26 436.33Z" fill="#0f0f0f"/><path d="M3.78 180.53L-1294.34 1248.45M76.73 180.09L-948.97 1239.16M149.46 179.66L-608.27 1230.00M221.99 179.22L-272.14 1220.96M294.29 178.79L59.50 1212.04M366.39 178.36L386.75 1203.24M438.27 177.92L709.69 1194.56M509.95 177.49L1028.41 1185.99M581.42 177.07L1343.00 1177.53M652.67 176.64L1653.52 1169.18M723.72 176.21L1960.05 1160.94M3.78 180.53L723.72 176.21M-26.59 205.52L754.14 200.44M-62.61 235.15L790.12 229.10M-106.03 270.86L833.35 263.53M-159.36 314.74L886.25 305.66M-226.47 369.95L952.47 358.41M-313.45 441.51L1037.79 426.37M-430.71 537.97L1151.85 517.21M-597.34 675.05L1312.12 644.87M-852.88 885.27L1553.80 837.36M-1294.34 1248.45L1960.05 1160.94" stroke="rgba(160,160,164,0.5)" stroke-width="1" fill="none"/><g fill="#f22a2a"><rect x="251.9" y="293.1" width="1.8" height="1.8"/><rect x="259.4" y="292.3" width="1.8" height="1.8"/><rect x="265.1" y="290.9" width="1.8" height="1.8"/><rect x="269.2" y="289.3" width="1.8" height="1.8"/><rect x="271.1" y="287.1" width="1.8" height="1.8"/><rect x="270.6" y="283.5" width="1.8" height="1.8"/><rect x="233.9" y="351.5" width="1.8" height="1.8"/><rect x="244.5" y="349.7" width="1.8" height="1.8"/><rect x="248.2" y="347.4" width="1.8" height="1.8"/><rect x="251.2" y="345.4" width="1.8" height="1.8"/><rect x="254.8" y="342.9" width="1.8" height="1.8"/><rect x="251.1" y="339.7" width="1.8" height="1.8"/><rect x="248.9" y="336.5" width="1.8" height="1.8"/><rect x="364.7" y="353.2" width="1.8" height="1.8"/><rect x="372.5" y="352.9" width="1.8" height="1.8"/><rect x="375.8" y="351.8" width="1.8" height="1.8"/><rect x="380.2" y="350.7" width="1.8" height="1.8"/><rect x="382.1" y="348.8" width="1.8" height="1.8"/><rect x="384.7" y="347.5" width="1.8" height="1.8"/><rect x="385.4" y="344.7" width="1.8" height="1.8"/><rect x="384.3" y="342.4" width="1.8" height="1.8"/><rect x="382.8" y="339.9" width="1.8" height="1.8"/><rect x="365.5" y="294.4" width="1.8" height="1.8"/><rect x="476.4" y="295.4" width="1.8" height="1.8"/><rect x="480.1" y="295.1" width="1.8" height="1.8"/><rect x="485.1" y="297.1" width="1.8" height="1.8"/><rect x="489.1" y="296.6" width="1.8" height="1.8"/><rect x="492.1" y="295.8" width="1.8" height="1.8"/><rect x="496.1" y="295.1" width="1.8" height="1.8"/><rect x="499.3" y="292.5" width="1.8" height="1.8"/><rect x="489.1" y="353.7" width="1.8" height="1.8"/><rect x="498.1" y="353.9" width="1.8" height="1.8"/><rect x="503.1" y="352.4" width="1.8" height="1.8"/><rect x="507.1" y="351.1" width="1.8" height="1.8"/><rect x="511.1" y="349.9" width="1.8" height="1.8"/><rect x="514.5" y="348.1" width="1.8" height="1.8"/><rect x="516.5" y="347.0" width="1.8" height="1.8"/><rect x="213.6" y="406.2" width="1.8" height="1.8"/><rect x="225.4" y="408.8" width="1.8" height="1.8"/><rect x="229.7" y="412.0" width="1.8" height="1.8"/><rect x="230.6" y="415.5" width="1.8" height="1.8"/><rect x="229.0" y="418.6" width="1.8" height="1.8"/><rect x="227.3" y="422.3" width="1.8" height="1.8"/><rect x="365.1" y="408.9" width="1.8" height="1.8"/><rect x="371.9" y="410.1" width="1.8" height="1.8"/><rect x="376.1" y="411.5" width="1.8" height="1.8"/><rect x="379.6" y="414.0" width="1.8" height="1.8"/><rect x="381.5" y="417.2" width="1.8" height="1.8"/><rect x="382.9" y="420.7" width="1.8" height="1.8"/><rect x="381.5" y="424.2" width="1.8" height="1.8"/><rect x="380.4" y="427.1" width="1.8" height="1.8"/><rect x="501.4" y="413.2" width="1.8" height="1.8"/><rect x="506.1" y="411.5" width="1.8" height="1.8"/><rect x="510.1" y="410.6" width="1.8" height="1.8"/><rect x="514.1" y="410.9" width="1.8" height="1.8"/><rect x="518.1" y="411.7" width="1.8" height="1.8"/><rect x="522.1" y="413.6" width="1.8" height="1.8"/><rect x="526.1" y="415.6" width="1.8" height="1.8"/><rect x="530.1" y="418.9" width="1.8" height="1.8"/><rect x="533.1" y="421.7" width="1.8" height="1.8"/><rect x="537.8" y="425.1" width="1.8" height="1.8"/><rect x="409.1" y="227.1" width="1.8" height="1.8"/><rect x="416.1" y="228.1" width="1.8" height="1.8"/><rect x="96.7" y="502.1" width="1.8" height="1.8"/><rect x="103.6" y="505.4" width="1.8" height="1.8"/><rect x="110.5" y="508.7" width="1.8" height="1.8"/><rect x="117.3" y="512.0" width="1.8" height="1.8"/><rect x="124.2" y="515.3" width="1.8" height="1.8"/><rect x="131.1" y="518.6" width="1.8" height="1.8"/><rect x="138.0" y="521.9" width="1.8" height="1.8"/><rect x="144.8" y="525.2" width="1.8" height="1.8"/><rect x="151.7" y="528.5" width="1.8" height="1.8"/><rect x="158.6" y="531.7" width="1.8" height="1.8"/><rect x="165.5" y="535.0" width="1.8" height="1.8"/><rect x="172.3" y="538.3" width="1.8" height="1.8"/><rect x="179.2" y="541.6" width="1.8" height="1.8"/><rect x="186.1" y="544.9" width="1.8" height="1.8"/><rect x="193.0" y="548.2" width="1.8" height="1.8"/><rect x="199.8" y="551.5" width="1.8" height="1.8"/><rect x="206.7" y="554.8" width="1.8" height="1.8"/><rect x="213.6" y="558.1" width="1.8" height="1.8"/><rect x="488.8" y="564.0" width="1.8" height="1.8"/><rect x="494.8" y="561.5" width="1.8" height="1.8"/><rect x="500.9" y="559.0" width="1.8" height="1.8"/><rect x="506.9" y="556.4" width="1.8" height="1.8"/><rect x="513.0" y="553.9" width="1.8" height="1.8"/><rect x="519.0" y="551.4" width="1.8" height="1.8"/><rect x="525.0" y="548.9" width="1.8" height="1.8"/><rect x="531.1" y="546.3" width="1.8" height="1.8"/><rect x="537.1" y="543.8" width="1.8" height="1.8"/><rect x="543.2" y="541.3" width="1.8" height="1.8"/><rect x="549.2" y="538.8" width="1.8" height="1.8"/><rect x="555.2" y="536.2" width="1.8" height="1.8"/><rect x="561.3" y="533.7" width="1.8" height="1.8"/><rect x="567.3" y="531.2" width="1.8" height="1.8"/><rect x="573.4" y="528.7" width="1.8" height="1.8"/><rect x="579.4" y="526.1" width="1.8" height="1.8"/><rect x="585.4" y="523.6" width="1.8" height="1.8"/><rect x="591.5" y="521.1" width="1.8" height="1.8"/><rect x="597.5" y="518.6" width="1.8" height="1.8"/><rect x="603.6" y="516.1" width="1.8" height="1.8"/><rect x="609.6" y="513.5" width="1.8" height="1.8"/><rect x="615.6" y="511.0" width="1.8" height="1.8"/><rect x="621.7" y="508.5" width="1.8" height="1.8"/><rect x="627.7" y="506.0" width="1.8" height="1.8"/><rect x="633.8" y="503.4" width="1.8" height="1.8"/><rect x="639.8" y="500.9" width="1.8" height="1.8"/><rect x="645.8" y="498.4" width="1.8" height="1.8"/><rect x="651.9" y="495.9" width="1.8" height="1.8"/><rect x="657.9" y="493.3" width="1.8" height="1.8"/><rect x="664.0" y="490.8" width="1.8" height="1.8"/><rect x="670.0" y="488.3" width="1.8" height="1.8"/><rect x="670.0" y="488.3" width="1.8" height="1.8"/><rect x="668.0" y="483.5" width="1.8" height="1.8"/><rect x="665.9" y="478.8" width="1.8" height="1.8"/><rect x="663.9" y="474.0" width="1.8" height="1.8"/><rect x="661.9" y="469.2" width="1.8" height="1.8"/><rect x="659.8" y="464.4" width="1.8" height="1.8"/><rect x="657.8" y="459.6" width="1.8" height="1.8"/><rect x="655.7" y="454.9" width="1.8" height="1.8"/><rect x="653.7" y="450.1" width="1.8" height="1.8"/><rect x="653.7" y="450.1" width="1.8" height="1.8"/><rect x="658.3" y="448.1" width="1.8" height="1.8"/><rect x="662.9" y="446.1" width="1.8" height="1.8"/><rect x="667.6" y="444.1" width="1.8" height="1.8"/><rect x="672.2" y="442.1" width="1.8" height="1.8"/><rect x="676.8" y="440.1" width="1.8" height="1.8"/><rect x="681.4" y="438.1" width="1.8" height="1.8"/><rect x="686.0" y="436.1" width="1.8" height="1.8"/><rect x="690.6" y="434.1" width="1.8" height="1.8"/><rect x="695.2" y="432.1" width="1.8" height="1.8"/><rect x="699.9" y="430.1" width="1.8" height="1.8"/><rect x="704.5" y="428.1" width="1.8" height="1.8"/><rect x="709.1" y="426.1" width="1.8" height="1.8"/><rect x="475.4" y="240.9" width="1.8" height="1.8"/><rect x="480.2" y="242.1" width="1.8" height="1.8"/><rect x="485.0" y="243.2" width="1.8" height="1.8"/><rect x="489.8" y="244.4" width="1.8" height="1.8"/><rect x="494.6" y="245.5" width="1.8" height="1.8"/><rect x="499.4" y="246.7" width="1.8" height="1.8"/><rect x="504.2" y="247.9" width="1.8" height="1.8"/><rect x="509.0" y="249.0" width="1.8" height="1.8"/><rect x="513.8" y="250.2" width="1.8" height="1.8"/><rect x="518.5" y="251.4" width="1.8" height="1.8"/><rect x="523.3" y="252.5" width="1.8" height="1.8"/><rect x="528.1" y="253.7" width="1.8" height="1.8"/><rect x="532.9" y="254.8" width="1.8" height="1.8"/><rect x="537.7" y="256.0" width="1.8" height="1.8"/><rect x="542.5" y="257.2" width="1.8" height="1.8"/><rect x="547.3" y="258.3" width="1.8" height="1.8"/><rect x="552.1" y="259.5" width="1.8" height="1.8"/><rect x="555.8" y="261.8" width="1.8" height="1.8"/><rect x="559.5" y="264.1" width="1.8" height="1.8"/><rect x="563.2" y="266.3" width="1.8" height="1.8"/><rect x="566.9" y="268.6" width="1.8" height="1.8"/><rect x="570.6" y="270.9" width="1.8" height="1.8"/><rect x="575.1" y="272.4" width="1.8" height="1.8"/><rect x="579.5" y="273.8" width="1.8" height="1.8"/><rect x="584.0" y="275.3" width="1.8" height="1.8"/><rect x="588.4" y="276.8" width="1.8" height="1.8"/><rect x="592.9" y="278.2" width="1.8" height="1.8"/><rect x="597.4" y="279.7" width="1.8" height="1.8"/><rect x="601.8" y="281.2" width="1.8" height="1.8"/><rect x="606.3" y="282.6" width="1.8" height="1.8"/><rect x="610.7" y="284.1" width="1.8" height="1.8"/><rect x="615.2" y="285.6" width="1.8" height="1.8"/><rect x="619.7" y="287.0" width="1.8" height="1.8"/><rect x="624.1" y="288.5" width="1.8" height="1.8"/><rect x="628.6" y="290.0" width="1.8" height="1.8"/><rect x="633.0" y="291.4" width="1.8" height="1.8"/><rect x="637.5" y="292.9" width="1.8" height="1.8"/><rect x="640.0" y="296.9" width="1.8" height="1.8"/><rect x="642.5" y="300.9" width="1.8" height="1.8"/><rect x="645.0" y="305.0" width="1.8" height="1.8"/><rect x="647.5" y="309.0" width="1.8" height="1.8"/><rect x="649.9" y="313.0" width="1.8" height="1.8"/><rect x="652.4" y="317.0" width="1.8" height="1.8"/><rect x="654.9" y="321.0" width="1.8" height="1.8"/><rect x="657.4" y="325.1" width="1.8" height="1.8"/><rect x="659.9" y="329.1" width="1.8" height="1.8"/><rect x="662.4" y="333.1" width="1.8" height="1.8"/><rect x="665.0" y="336.9" width="1.8" height="1.8"/><rect x="667.6" y="340.7" width="1.8" height="1.8"/><rect x="670.3" y="344.5" width="1.8" height="1.8"/><rect x="672.9" y="348.4" width="1.8" height="1.8"/><rect x="675.5" y="352.2" width="1.8" height="1.8"/><rect x="678.1" y="356.0" width="1.8" height="1.8"/><rect x="680.8" y="359.8" width="1.8" height="1.8"/><rect x="683.4" y="363.6" width="1.8" height="1.8"/><rect x="685.7" y="368.1" width="1.8" height="1.8"/><rect x="688.1" y="372.5" width="1.8" height="1.8"/><rect x="690.4" y="377.0" width="1.8" height="1.8"/><rect x="692.7" y="381.5" width="1.8" height="1.8"/><rect x="695.1" y="385.9" width="1.8" height="1.8"/><rect x="697.4" y="390.4" width="1.8" height="1.8"/><rect x="699.7" y="394.9" width="1.8" height="1.8"/><rect x="702.1" y="399.3" width="1.8" height="1.8"/><rect x="704.4" y="403.8" width="1.8" height="1.8"/><rect x="706.8" y="407.5" width="1.8" height="1.8"/><rect x="709.2" y="411.2" width="1.8" height="1.8"/><rect x="711.5" y="415.0" width="1.8" height="1.8"/><rect x="713.9" y="418.7" width="1.8" height="1.8"/><rect x="716.3" y="422.4" width="1.8" height="1.8"/><rect x="718.7" y="426.1" width="1.8" height="1.8"/></g><line x1="369.0" y1="343.5" x2="369.0" y2="364.5" stroke="#1010d0" stroke-width="4.2"/><line x1="368.0" y1="364.5" x2="368.0" y2="376.5" stroke="#8a3a1a" stroke-width="3.5"/><line x1="371.0" y1="364.8" x2="393.5" y2="364.8" stroke="#10e010" stroke-width="3"/><line x1="373.0" y1="367.0" x2="379.0" y2="368.0" stroke="#ff20ff" stroke-width="2"/><line x1="378" y1="368" x2="543.6" y2="403.8" stroke="#d6c25a" stroke-width="1.4" stroke-dasharray="2.2 0.8"/><line x1="562.0" y1="384.0" x2="562.0" y2="409.0" stroke="#e01010" stroke-width="3"/><line x1="562.0" y1="382.0" x2="575.6" y2="376.0" stroke="#e81414" stroke-width="2.8"/><line x1="562.0" y1="393.0" x2="575.6" y2="388.5" stroke="#e81414" stroke-width="2.8"/><line x1="562.0" y1="400.0" x2="575.6" y2="396.0" stroke="#e81414" stroke-width="2.8"/><line x1="551.2" y1="383.7" x2="538.8" y2="374.2" stroke="#1a8a1a" stroke-width="2.8"/><line x1="543.6" y1="391.0" x2="535.0" y2="384.2" stroke="#1010c0" stroke-width="2.6"/><line x1="543.6" y1="395.2" x2="533.0" y2="390.0" stroke="#10d010" stroke-width="2.6"/><line x1="542.6" y1="403.8" x2="531.6" y2="394.2" stroke="#1010c0" stroke-width="2.6"/><line x1="562.7" y1="406.7" x2="583.3" y2="399.5" stroke="#10e010" stroke-width="2.6"/><line x1="544.3" y1="407.6" x2="544.1" y2="428.7" stroke="#90e090" stroke-width="1.8"/><line x1="544.0" y1="406.0" x2="535.5" y2="417.2" stroke="#f0c080" stroke-width="1.6"/><rect x="542.5" y="385" width="19" height="25.5" rx="4" fill="#3a3a3a"/><line x1="554.5" y1="385.6" x2="557.0" y2="364.6" stroke="#1010d0" stroke-width="3.4"/><ellipse cx="552" cy="387" rx="9" ry="3" fill="#2e2e2e"/></svg>
</body></html>
